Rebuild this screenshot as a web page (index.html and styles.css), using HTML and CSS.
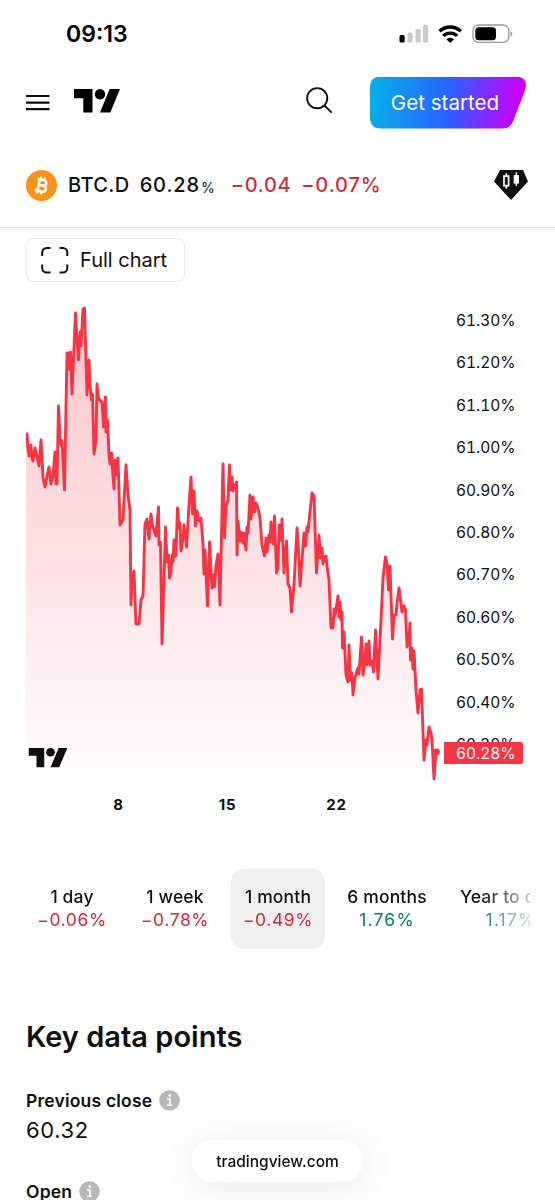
FILE: index.html
```html
<!DOCTYPE html>
<html lang="en">
<head>
    <meta charset="UTF-8">
    <meta name="viewport" content="width=device-width, initial-scale=1.0">
    <title>BTC.D 60.28%</title>
    <link rel="stylesheet" href="styles.css">
</head>
<body>
    <div class="status-bar">
        <span class="clock">09:13</span>
        <svg class="status-icons" width="116" height="22" viewBox="398 22 116 22">
            <rect x="399.5" y="34" width="5.2" height="7.5" rx="1.5"/>
            <g fill="#cbcbcb">
                <rect x="407.5" y="31.5" width="5.2" height="10" rx="1.5"/>
                <rect x="415.5" y="28" width="5.2" height="13.5" rx="1.5"/>
                <rect x="423" y="24" width="5.2" height="17.5" rx="1.5"/>
            </g>
            <g fill="none" stroke="#000" stroke-width="3.4">
                <path d="M439.5 30.3a15.4 15.4 0 0 1 21.4 0"/>
                <path d="M443.3 34.9a9.9 9.9 0 0 1 13.8 0"/>
            </g>
            <path d="M446.3 38.2a5.7 5.7 0 0 1 7.8 0l-3.9 3.8z"/>
            <rect x="473" y="24" width="35.8" height="17.4" rx="5.5" fill="none" stroke="#9a9a9a" stroke-width="1.3"/>
            <rect x="475.3" y="26.2" width="20.7" height="13" rx="3.5"/>
            <path d="M510.5 30.2c2.3.8 2.3 4.6 0 5.4z" fill="#9a9a9a"/>
        </svg>
    </div>

    <header class="header">
        <svg class="menu-icon" width="24" height="18" viewBox="0 0 24 18">
            <path d="M0 2h23.5M0 8.6h23.5M0 15.2h23.5" stroke="#0f0f0f" stroke-width="2.2"/>
        </svg>
        <svg class="logo" width="46" height="24" viewBox="0 0 46 24">
            <path d="M0 0h18.5v23.5H9.3V9.3H0z"/>
            <circle cx="26" cy="5.3" r="5.2"/>
            <path d="M35.7 0H46l-9.7 23.5H26z"/>
        </svg>
        <svg class="search-icon" width="27" height="27" viewBox="0 0 27 27">
            <circle cx="11.2" cy="11.2" r="10.1" fill="none" stroke="#0f0f0f" stroke-width="1.9"/>
            <path d="M18 18l7.7 7.6" stroke="#0f0f0f" stroke-width="1.9"/>
        </svg>
        <button class="get-started">Get started</button>
    </header>

    <div class="symbol-bar">
        <svg class="coin" width="31" height="31" viewBox="0 0 31 31">
            <circle cx="15.5" cy="15.5" r="15.5" fill="#f7931a"/>
            <g transform="rotate(13 15.5 15.5)" fill="none" stroke="#fff" stroke-width="2.5">
                <path d="M10 9.8h6.8a2.8 2.8 0 0 1 0 5.6h-4h4.8a3 3 0 0 1 0 6H10M12.6 9.8v11.6"/>
                <path d="M13.1 6.8v3M17 6.8v3M13.1 21.2v3.2M17 21.2v3.2" stroke-width="1.8"/>
            </g>
        </svg>
        <span class="ticker">BTC.D</span>
        <span class="price">60.28</span>
        <span class="unit">%</span>
        <span class="change">−0.04</span>
        <span class="change-percent">−0.07%</span>
        <svg class="gem" width="34" height="30" viewBox="0 0 34 30">
            <path d="M6 0h23l5 11.5L17 30 0 11.5z" fill="#0f0f0f"/>
            <path d="M10 6.2h4.6v9.4H10zM12.3 3.3v2.9M12.3 15.6v3.2" fill="none" stroke="#fff" stroke-width="1.7"/>
            <path d="M19.7 5h5.3v8.6h-5.3z" fill="#fff"/>
            <path d="M22.3 2.3v13.5" stroke="#fff" stroke-width="1.5"/>
        </svg>
    </div>

    <main>
        <button class="full-chart">
            <svg width="28" height="27" viewBox="0 0 28 27" fill="none" stroke="#0f0f0f" stroke-width="2">
                <path d="M1.2 9V5.5a4.5 4.5 0 0 1 4.5-4.5H9.5M18.5 1h3.3a4.5 4.5 0 0 1 4.5 4.5V9M26.3 17.5V21a4.5 4.5 0 0 1-4.5 4.5h-3.3M9.5 25.5H5.7A4.5 4.5 0 0 1 1.2 21v-3.5"/>
            </svg>
            <span>Full chart</span>
        </button>

        <div class="chart">
            <svg class="plot" width="418" height="490" viewBox="26 294 418 490">
                <defs>
                    <linearGradient id="area" gradientUnits="userSpaceOnUse" x1="0" y1="308" x2="0" y2="784">
                        <stop offset="0" stop-color="#f7525f" stop-opacity=".34"/>
                        <stop offset="1" stop-color="#f7525f" stop-opacity="0"/>
                    </linearGradient>
                </defs>
                <path id="fill" fill="url(#area)"/>
                <path id="line" fill="none" stroke="#f23645" stroke-width="2.9" stroke-linejoin="round" stroke-linecap="round"/>
                <circle cx="436.3" cy="752" r="3.6" fill="#f23645"/>
                <g transform="translate(28.7 748) scale(.84 .82)" fill="#0f0f0f">
                    <path d="M0 0h18.5v23.5H9.3V9.3H0z"/>
                    <circle cx="26" cy="5.3" r="5.2"/>
                    <path d="M35.7 0H46l-9.7 23.5H26z"/>
                </g>
            </svg>
            <div class="price-axis">
                <span>61.30%</span>
                <span>61.20%</span>
                <span>61.10%</span>
                <span>61.00%</span>
                <span>60.90%</span>
                <span>60.80%</span>
                <span>60.70%</span>
                <span>60.60%</span>
                <span>60.50%</span>
                <span>60.40%</span>
                <span>60.30%</span>
                <span class="last-price">60.28%</span>
            </div>
        </div>
        <div class="time-axis">
            <span>8</span>
            <span>15</span>
            <span>22</span>
        </div>

        <div class="ranges">
            <div class="range"><span>1 day</span><span class="down">−0.06%</span></div>
            <div class="range"><span>1 week</span><span class="down">−0.78%</span></div>
            <div class="range active"><span>1 month</span><span class="down">−0.49%</span></div>
            <div class="range wide"><span>6 months</span><span class="up">1.76%</span></div>
            <div class="range widest"><span>Year to date</span><span class="up">1.17%</span></div>
        </div>

        <h2>Key data points</h2>
        <div class="data-point">
            <div class="label">
                <span>Previous close</span>
                <svg width="21" height="21" viewBox="0 0 21 21">
                    <circle cx="10.5" cy="10.5" r="10.3" fill="#b8b8b8"/>
                    <path d="M8 9h3v6.8M8 15.3h5" fill="none" stroke="#fff" stroke-width="1.6"/>
                    <circle cx="10.8" cy="5.4" r="1.3" fill="#fff"/>
                </svg>
            </div>
            <div class="value">60.32</div>
        </div>
        <div class="data-point">
            <div class="label">
                <span>Open</span>
                <svg width="21" height="21" viewBox="0 0 21 21">
                    <circle cx="10.5" cy="10.5" r="10.3" fill="#b8b8b8"/>
                    <path d="M8 9h3v6.8M8 15.3h5" fill="none" stroke="#fff" stroke-width="1.6"/>
                    <circle cx="10.8" cy="5.4" r="1.3" fill="#fff"/>
                </svg>
            </div>
        </div>
    </main>

    <div class="address-pill">tradingview.com</div>

    <script>
        // x,y pairs of the price line
        var points = [
            27,434, 28,449, 29,456, 31,445, 32,458, 33,461, 35,448, 37,456, 39,466, 41,440, 42,458, 43,478, 45,487, 47,476, 49,467,
            51,484, 53,476, 55,452, 56,484, 57,484, 58.5,406, 60,437, 61,445, 62,441, 64.5,490, 67,353, 68,369, 68.5,353, 69.5,369,
            70.5,352, 72,394, 75.5,313, 77,340, 78.5,360, 80,332, 81,346, 83,309, 84.5,308, 87,395, 89,360, 90,385, 91.5,400,
            92.5,394, 94,454, 96,440, 97,384, 98.5,399, 100,400, 101,402, 102,402, 103.5,427, 105.5,397, 106,432, 107.5,420,
            109,455, 110,464, 111.5,453, 112.5,470, 114,489, 115,460, 116,475, 118,458, 120,525, 123,520, 126,465, 128,495, 130,510,
            131,605, 132,582, 134,571, 136,624, 139,624, 141,600, 143,596, 145,524, 147,519, 149,539, 151,514, 152.5,526,
            154,530, 156,536, 158.5,507, 159,545, 160.5,542, 162,644, 164,580, 165.5,527, 167,562, 168.5,555, 169.5,578, 171,572,
            172,555, 173,562, 174,540, 175.5,556, 176,552, 177.5,508, 179,528, 180,523, 181,551, 183,538, 184,525, 186.5,547,
            189,505, 191,477, 192.5,514, 194,491, 195.5,526, 197,511, 199,521, 201,518, 203,544, 204,574, 205,550, 207.5,606,
            209.5,542, 212,588, 213.5,575, 214.5,587, 216,565, 218,554, 220,605, 223,464, 224.5,538, 226,506, 228,500, 229.5,465,
            230.5,490, 232,477, 233,491, 236.5,482, 237,555, 238,521, 240,541, 241,532, 243,543, 244,533, 246,550, 247,527,
            248,533, 250,495, 251,519, 253,497, 254.5,512, 256,503, 258,508, 260,518, 262,545, 264.5,556, 266,538, 267,552,
            269,535, 270,542, 271,522, 273,544, 274.5,516, 276.5,573, 278,568, 279,525, 281,540, 282,519, 284,573, 286.5,541,
            288,584, 290,588, 291.5,612, 294,585, 297,528, 298.5,550, 300,586, 302,560, 304,533, 305.5,546, 307,527, 308,532,
            310,512, 312,493, 314,496, 316.5,573, 319,535, 320.5,558, 322,548, 323,564, 324.5,557, 326,556, 327,566, 329,580,
            331,628, 333,628, 334,609, 335,616, 338,596, 339,617, 340,602, 341,620, 342,612, 342.5,648, 344,632, 346,675, 348,682,
            349,645, 350.5,680, 352,673, 353,695, 355,678, 358,668, 359,674, 361.5,637, 363,675, 364.5,665, 366,644, 367,665,
            369,641, 370,665, 372,661, 373.5,672, 375.5,630, 378,679, 381,620, 383,578, 385.5,557, 387,563, 388.5,590, 390,566,
            392.5,639, 394,615, 396,615, 397,603, 399,588, 401,603, 402,612, 404,606, 405.5,610, 407,647, 408.5,645, 410,623,
            410.5,660, 412,648, 413,669, 414,651, 416,690, 418,713, 420,690, 421.5,689, 424,760, 426,740, 427,745, 429,727,
            431,733, 432,740, 434,779, 436,752
        ];
        var d = '';
        for (var i = 0; i < points.length; i += 2) {
            d += (i ? 'L' : 'M') + points[i] + ' ' + points[i + 1];
        }
        document.getElementById('line').setAttribute('d', d);
        document.getElementById('fill').setAttribute('d', d + 'V784H26V434Z');
    </script>
</body>
</html>
```
FILE: styles.css
```css
* {
    box-sizing: border-box;
}

body {
    margin: 0;
    height: 1200px;
    overflow: hidden;
    background: #fefefe;
    color: #0f0f0f;
    font-family: Inter, "Liberation Sans", sans-serif;
}

button {
    font-family: inherit;
    color: inherit;
    padding: 0;
}

svg {
    display: block;
    flex: none;
}

.status-bar {
    height: 66px;
    display: flex;
    align-items: center;
    justify-content: space-between;
    padding: 1px 41px 0 66px;
}

.clock {
    font-size: 23px;
    font-weight: 600;
    color: #000;
}

.header {
    height: 73px;
    display: flex;
    align-items: center;
    padding: 0 29px 0 26px;
}

.logo {
    margin-left: 24px;
    margin-top: -3px;
}

.search-icon {
    margin-left: auto;
    margin-right: 37px;
    margin-top: -5px;
}

.get-started {
    width: 156px;
    height: 52px;
    border: none;
    padding-right: 6px;
    color: #fff;
    font-size: 20.6px;
    background: linear-gradient(97deg, #06b2e8 0%, #2962ff 50%, #c900ff 93%);
    clip-path: path("M11 0H146Q159 1 155 14L143 45Q140 52 133 52H11Q0 52 0 41V11Q0 0 11 0Z");
}

.symbol-bar {
    height: 89px;
    display: flex;
    align-items: center;
    padding: 4px 27px 0 26px;
    border-bottom: 1px solid #e4e4e4;
    font-size: 20px;
    font-weight: 500;
}

.ticker {
    margin-left: 11px;
    letter-spacing: 0.4px;
}

.price {
    margin-left: 10px;
    letter-spacing: 0.9px;
}

.unit {
    font-size: 14px;
    font-weight: 400;
    margin: 5px 0 0 1px;
}

.change,
.change-percent {
    color: #cc2f3c;
    margin-left: 16px;
    letter-spacing: 0.6px;
}

.change-percent {
    margin-left: 10px;
    letter-spacing: 0.9px;
}

.gem {
    margin-left: auto;
}

main {
    padding: 10px 26px 0;
}

.full-chart {
    width: 159px;
    height: 44px;
    display: flex;
    align-items: center;
    gap: 11px;
    padding-left: 14px;
    border: 1.5px solid #ebebeb;
    border-radius: 8px;
    background: #fff;
    font-size: 20px;
}

.chart {
    display: flex;
    height: 490px;
    margin-top: 12px;
}

.price-axis {
    position: relative;
    width: 79px;
    padding-top: 5px;
    overflow: hidden;
    font-size: 15.5px;
    font-variant-numeric: tabular-nums;
}

.price-axis span {
    display: block;
    height: 42.4px;
    line-height: 43px;
    padding-left: 12px;
}

/* sits over the axis at the current price */
.price-axis .last-price {
    position: absolute;
    top: 448px;
    left: 0;
    width: 79px;
    height: 22px;
    line-height: 23px;
    border-radius: 0 2px 2px 0;
    background: #f23645;
    color: #fff;
}

.time-axis {
    display: flex;
    height: 40px;
    padding-left: 38px;
    font-size: 15px;
    font-weight: 700;
    line-height: 41px;
    letter-spacing: 0.8px;
}

.time-axis span {
    width: 109px;
    text-align: center;
}

.ranges {
    display: flex;
    gap: 9px;
    margin: 45px 0 0 -1px;
    width: 505px;
    overflow: hidden;
    -webkit-mask-image: linear-gradient(90deg, #000 90%, transparent 103%);
    mask-image: linear-gradient(90deg, #000 90%, transparent 103%);
}

.range {
    flex: none;
    width: 94px;
    height: 80px;
    display: flex;
    flex-direction: column;
    align-items: center;
    justify-content: center;
    padding-bottom: 2px;
    border-radius: 13px;
    font-size: 17.5px;
    line-height: 23px;
    white-space: nowrap;
}

.range span:first-child {
    font-weight: 450;
    letter-spacing: 0.15px;
}

.range.wide {
    width: 106px;
}

.range.widest {
    width: 124px;
}

.range.active {
    background: #f0f0f0;
}

.down {
    color: #cc2f3c;
    letter-spacing: 0.6px;
}

.up {
    color: #0b8062;
    letter-spacing: 1.2px;
}

h2 {
    margin: 68px 0 31px;
    font-size: 29px;
    font-weight: 600;
    line-height: 40px;
}

.data-point {
    height: 91px;
}

.label {
    display: flex;
    align-items: center;
    gap: 7px;
    height: 24px;
    font-size: 17.5px;
    font-weight: 600;
    letter-spacing: 0.2px;
}

.value {
    font-size: 22px;
    line-height: 36px;
    letter-spacing: 0.6px;
}

.address-pill {
    position: fixed;
    left: 192px;
    top: 1140px;
    width: 171px;
    height: 42px;
    line-height: 43px;
    border-radius: 21px;
    text-align: center;
    font-size: 15.5px;
    font-weight: 500;
    background: #fff;
    box-shadow: 0 4px 35px rgba(0, 0, 0, 0.08);
}
```
